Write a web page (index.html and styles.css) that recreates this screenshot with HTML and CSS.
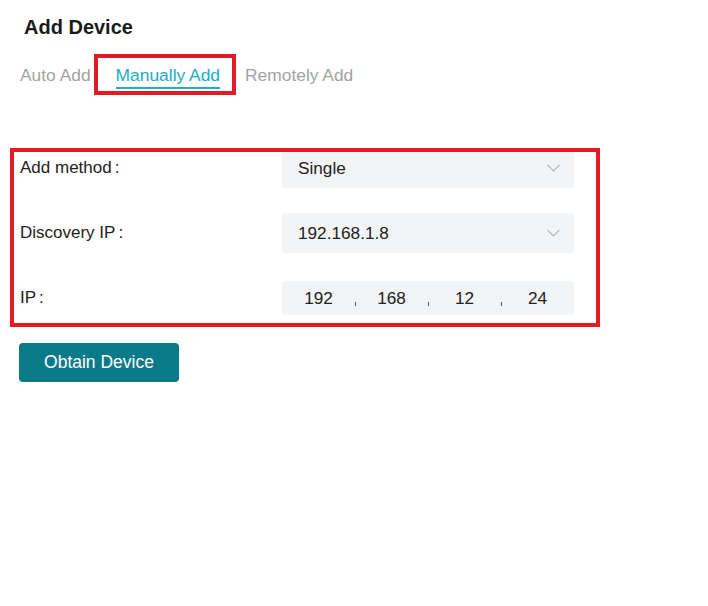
FILE: index.html
```html
<!DOCTYPE html>
<html lang="en">
<head>
<meta charset="utf-8">
<title>Add Device</title>
<link rel="stylesheet" href="styles.css">
</head>
<body>
<div class="page">
  <h1 class="title">Add Device</h1>
  <div class="tabs">
    <span class="tab">Auto Add</span>
    <span class="tab tab-active">Manually Add</span>
    <span class="tab">Remotely Add</span>
  </div>
  <div class="form">
    <div class="row">
      <div class="label">Add method<span class="colon">:</span></div>
      <div class="field select">
        <span class="value">Single</span>
        <svg class="chev" width="13" height="8" viewBox="0 0 13 8"><path d="M0.5 0.8 L6.5 7 L12.5 0.8" fill="none" stroke="#b4b4b4" stroke-width="1.1"/></svg>
      </div>
    </div>
    <div class="row">
      <div class="label">Discovery IP<span class="colon">:</span></div>
      <div class="field select">
        <span class="value">192.168.1.8</span>
        <svg class="chev" width="13" height="8" viewBox="0 0 13 8"><path d="M0.5 0.8 L6.5 7 L12.5 0.8" fill="none" stroke="#b4b4b4" stroke-width="1.1"/></svg>
      </div>
    </div>
    <div class="row">
      <div class="label">IP<span class="colon">:</span></div>
      <div class="field ip">
        <span class="seg">192</span><span class="dot"></span>
        <span class="seg">168</span><span class="dot"></span>
        <span class="seg">12</span><span class="dot"></span>
        <span class="seg">24</span>
      </div>
    </div>
  </div>
  <button class="btn">Obtain Device</button>
</div>
</body>
</html>
```

FILE: styles.css
```css
html, body {
  margin: 0;
  padding: 0;
  background: #ffffff;
}
body {
  font-family: "Liberation Sans", Arial, sans-serif;
  color: #222222;
}
.page {
  padding: 13px 20px 0 20px;
}
.title {
  margin: 0 0 0 4px;
  font-size: 20px;
  font-weight: bold;
  line-height: 28px;
  color: #1b1b1b;
}
.tabs {
  display: flex;
  gap: 25px;
  margin-top: 22px;
}
.tab {
  position: relative;
  font-size: 17.4px;
  line-height: 24px;
  color: #a3a3a3;
  border-bottom: 2px solid transparent;
}
.tab-active {
  color: #18aec6;
  border-bottom-color: #18aec6;
}
.tab-active::after {
  content: "";
  position: absolute;
  left: -22px;
  right: -16px;
  top: -9px;
  bottom: -8px;
  border: 4px solid #e41b25;
}
.form {
  position: relative;
  margin-top: 59px;
  display: flex;
  flex-direction: column;
  gap: 25px;
}
.form::after {
  content: "";
  position: absolute;
  left: -10px;
  top: 0;
  width: 590px;
  height: 179px;
  box-sizing: border-box;
  border: 4px solid #e41b25;
  pointer-events: none;
}
.row {
  display: flex;
  align-items: center;
  height: 40px;
}
.label {
  width: 262px;
  font-size: 17px;
  color: #222222;
}
.colon {
  margin-left: 3px;
}
.field {
  width: 292px;
  background: #f3f4f6;
  border-radius: 4px;
  font-size: 17.2px;
  color: #222222;
  display: flex;
  align-items: center;
}
.select {
  height: 40px;
  padding: 0 12px 0 16px;
  box-sizing: border-box;
  justify-content: space-between;
}
.chev {
  margin-right: 2px;
}
.ip {
  height: 34px;
}
.seg {
  flex: 1;
  text-align: center;
}
.dot {
  align-self: flex-start;
  width: 1px;
  height: 4px;
  margin: 21px -0.5px 0;
  background: #555555;
}
.btn {
  margin-top: 25px;
  margin-left: -1px;
  width: 160px;
  height: 39px;
  border: none;
  border-radius: 4px;
  background: #0a7a88;
  color: #ffffff;
  font-family: "Liberation Sans", Arial, sans-serif;
  font-size: 17.5px;
  padding: 0;
}
```
